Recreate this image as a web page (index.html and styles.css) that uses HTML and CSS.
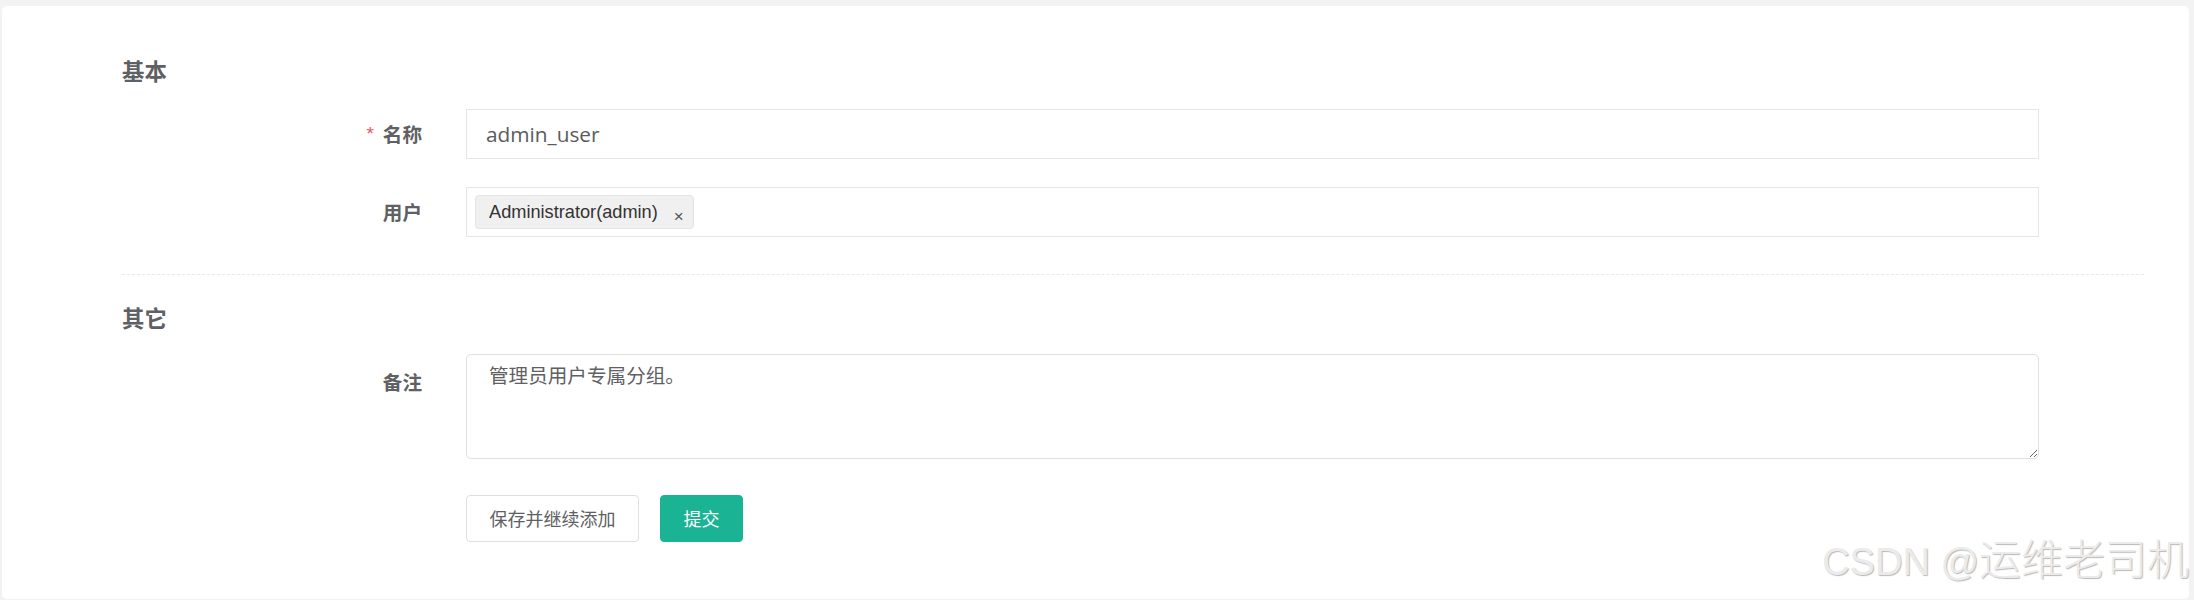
FILE: index.html
```html
<!DOCTYPE html>
<html lang="zh-CN">
<head>
<meta charset="utf-8">
<title>分组</title>
<link rel="stylesheet" href="styles.css">
</head>
<body>
<div class="card">
  <h4 class="section-title">基本</h4>
  <div class="form-row">
    <label class="form-label"><span class="req">*</span>名称</label>
    <div class="control input">admin_user</div>
  </div>
  <div class="form-row row-gap">
    <label class="form-label">用户</label>
    <div class="control input tags"><span class="tag"><span class="tag-text">Administrator(admin)</span><span class="tag-x">×</span></span></div>
  </div>
  <div class="divider"></div>
  <h4 class="section-title section-title--second">其它</h4>
  <div class="form-row">
    <label class="form-label form-label--top">备注</label>
    <textarea class="control textarea">管理员用户专属分组。</textarea>
  </div>
  <div class="form-row actions">
    <div class="form-label"></div>
    <div class="btns">
      <button class="btn btn-white">保存并继续添加</button>
      <button class="btn btn-primary">提交</button>
    </div>
  </div>
  <div class="watermark"><span class="wm-latin">CSDN @</span><span class="wm-cjk">运维老司机</span></div>
</div>
</body>
</html>
```

FILE: styles.css
```css
html, body {
  margin: 0;
  padding: 0;
  background: #f3f3f4;
  overflow: hidden;
}
body {
  font-family: "Open Sans", "Noto Sans CJK SC", sans-serif;
  color: #676a6c;
  height: 600px;
}
.card {
  position: relative;
  margin: 6px 5px 0 2px;
  padding: 49px 45px 54px 120px;
  background: #ffffff;
  border-radius: 5px;
}
.section-title {
  margin: 0 0 24px 0;
  font-family: "Noto Sans CJK SC", sans-serif;
  font-size: 22.4px;
  font-weight: 700;
  line-height: 30px;
  color: #5e6063;
}
.section-title--second {
  margin-top: 27px;
  margin-bottom: 22px;
}
.form-row {
  display: grid;
  grid-template-columns: 300px 1573px;
  column-gap: 44px;
  align-items: start;
}
.row-gap {
  margin-top: 28px;
}
.form-label {
  height: 50px;
  text-align: right;
  font-family: "Noto Sans CJK SC", sans-serif;
  font-size: 19.6px;
  font-weight: 700;
  line-height: 50px;
  color: #5e6063;
}
.form-label--top {
  padding-top: 3px;
}
.req {
  color: #ed5565;
  font-family: "Liberation Sans", sans-serif;
  font-weight: 400;
  font-size: 19px;
  line-height: 1;
  margin-right: 9px;
  position: relative;
  top: -2px;
}
.control {
  box-sizing: border-box;
}
.input {
  height: 50px;
  border: 1px solid #e5e6e7;
  padding: 0 19px;
  font-family: "Open Sans", sans-serif;
  font-size: 20.8px;
  line-height: 48px;
  color: #595b5d;
  background: #fff;
}
.tags {
  padding: 7px 8px;
  line-height: normal;
  display: flex;
  align-items: flex-start;
}
.tag {
  box-sizing: border-box;
  display: inline-flex;
  align-items: center;
  height: 34px;
  padding: 0 9px 0 13px;
  background: #f0f0f0;
  border: 1px solid #e3e3e3;
  border-radius: 4px;
  font-family: "Liberation Sans", Arial, sans-serif;
  font-size: 18.2px;
  color: #333333;
}
.tag-x {
  margin-left: 16px;
  margin-top: 8px;
  font-size: 17px;
  color: #555;
  line-height: 1;
}
.divider {
  margin-top: 37px;
  border-top: 1px dashed #e7eaec;
}
.textarea {
  display: block;
  width: 100%;
  height: 105px;
  margin: 0;
  border: 1px solid #dedee4;
  border-radius: 5px;
  padding: 6px 22px;
  font-family: "Open Sans", "Noto Sans CJK SC", sans-serif;
  font-size: 19.6px;
  line-height: 29px;
  color: #5e6063;
  background: #fff;
  outline: none;
}
.actions {
  margin-top: 36px;
}
.btns {
  display: flex;
  gap: 21px;
}
.btn {
  box-sizing: border-box;
  height: 47px;
  padding: 0;
  border-radius: 4px;
  font-family: "Noto Sans CJK SC", sans-serif;
  font-size: 18px;
  line-height: 45px;
  white-space: nowrap;
  text-align: center;
  cursor: pointer;
}
.btn-white {
  width: 173px;
  background: #ffffff;
  border: 1px solid #dedee4;
  color: #5e6063;
}
.btn-primary {
  width: 83px;
  background: #1ab394;
  border: 1px solid #1ab394;
  color: #ffffff;
}
.watermark {
  position: absolute;
  right: 0;
  bottom: 5px;
  white-space: nowrap;
  color: #ebebeb;
  text-shadow: 1px 1px 1px #b9b9b9;
  line-height: 50px;
}
.wm-latin {
  font-family: "Liberation Sans", Arial, sans-serif;
  font-size: 38px;
}
.wm-cjk {
  font-family: "Noto Sans CJK SC", sans-serif;
  font-weight: 300;
  font-size: 42px;
}
```
